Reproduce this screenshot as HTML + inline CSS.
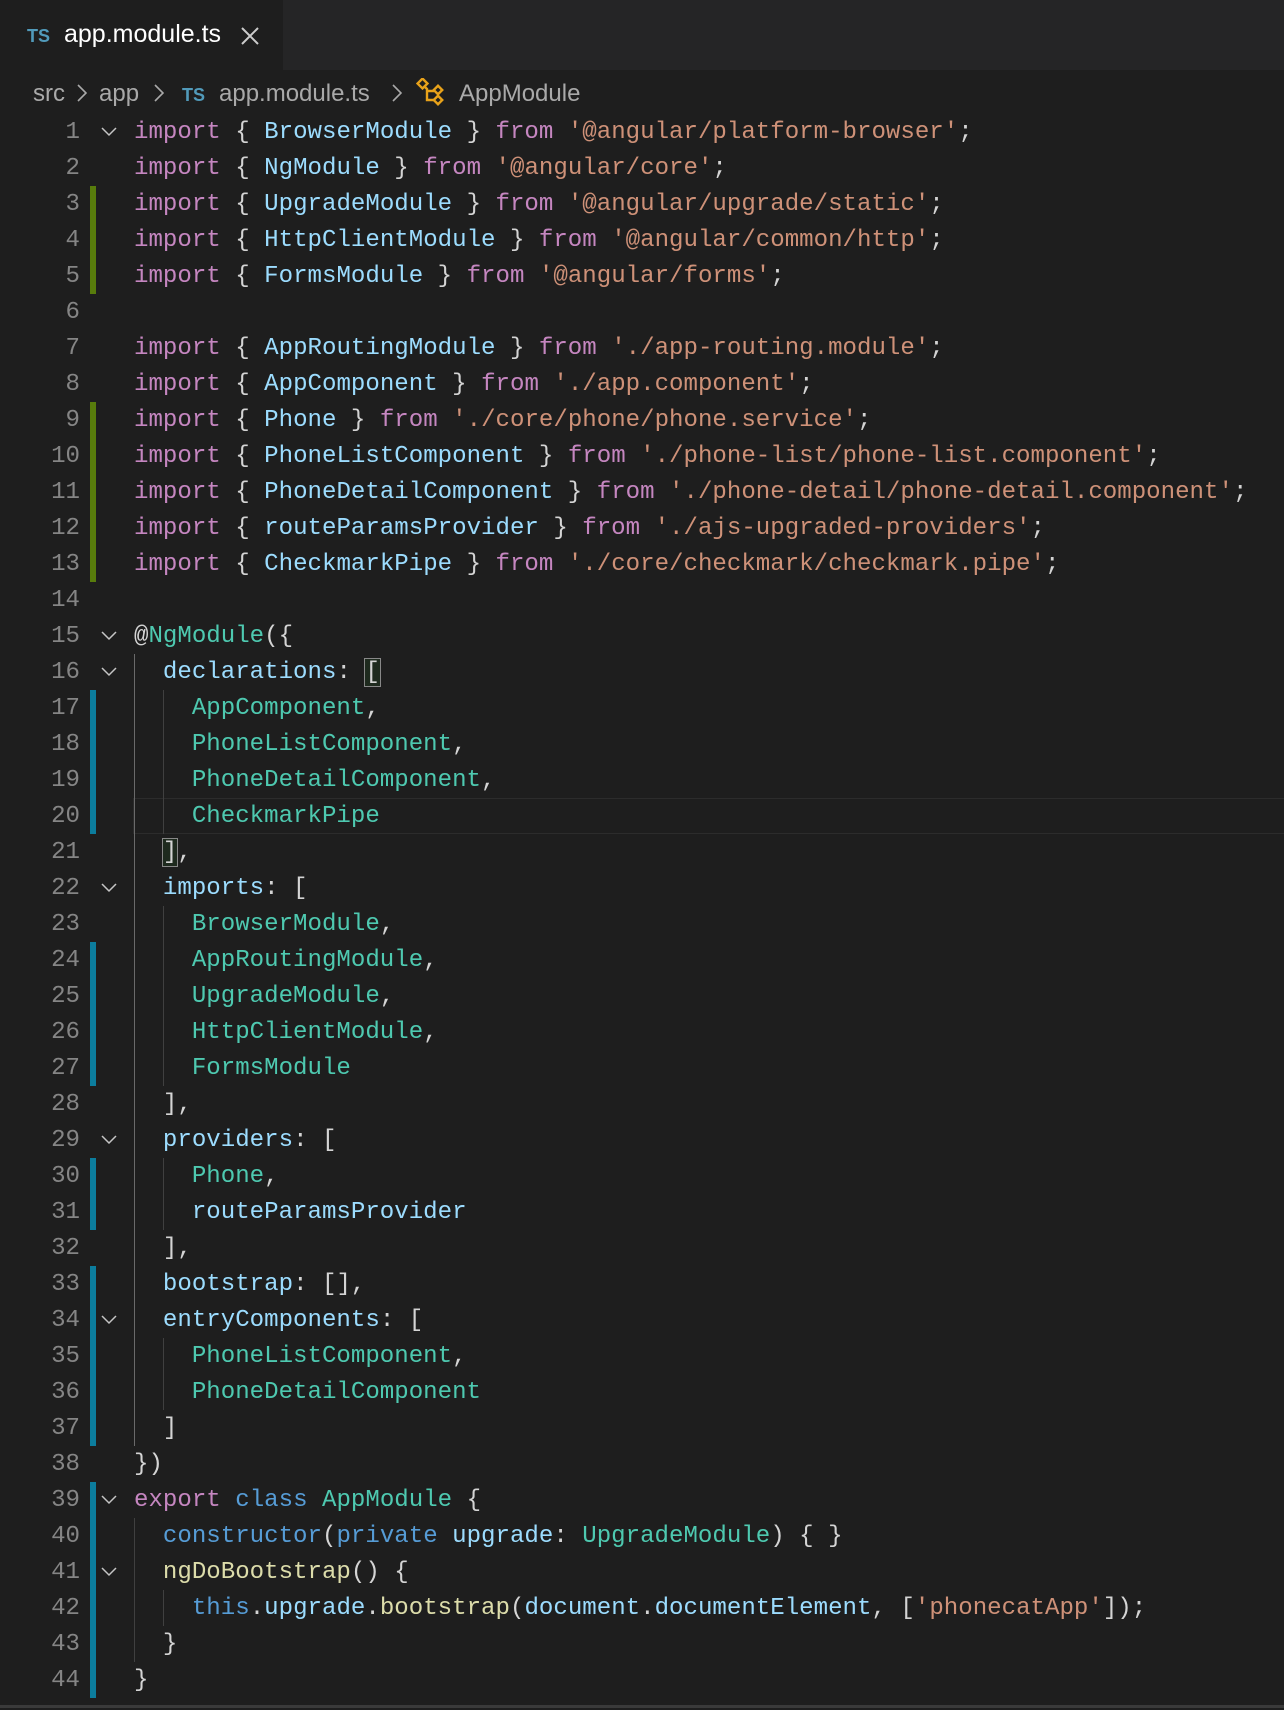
<!DOCTYPE html>
<html><head><meta charset="utf-8"><style>
body{margin:0;width:1284px;height:1710px;background:#1e1e1e;overflow:hidden;position:relative;font-family:"Liberation Mono",monospace}
.tabbar{position:absolute;left:0;top:0;width:1284px;height:70px;background:#252526}
.tab{position:absolute;left:0;top:0;width:283px;height:70px;background:#1e1e1e}
.ts{position:absolute;font-family:"Liberation Sans",sans-serif;font-weight:bold;color:#519aba}
.bc{position:absolute;top:77px;height:34px;font-family:"Liberation Sans",sans-serif;font-size:24px;color:#a9a9a9;line-height:34px;white-space:nowrap}
.ln{position:absolute;left:0;width:80px;text-align:right;height:36px;line-height:38px;font-size:24.1px;color:#858585}
.code{position:absolute;left:134px;height:36px;line-height:38px;font-size:24.1px;color:#d4d4d4;white-space:pre}
.g{position:absolute;left:90px;width:6px}
.fold{position:absolute;left:101px;width:16px;height:36px}
.guide{position:absolute;width:1px;background:#404040}
.k{color:#c586c0}.v{color:#9cdcfe}.s{color:#ce9178}.t{color:#4ec9b0}.b{color:#569cd6}.f{color:#dcdcaa}
.bm{outline:1px solid #888;background:#1e2a1e}
</style></head><body>
<div class="tabbar"></div>
<div class="tab"></div>
<div class="ts" style="left:27px;top:26px;font-size:18px">TS</div>
<div style="position:absolute;left:64px;top:20px;font-family:'Liberation Sans',sans-serif;font-size:25px;color:#fff">app.module.ts</div>
<svg style="position:absolute;left:241px;top:27px" width="18" height="18" viewBox="0 0 18 18"><path d="M1 1L17 17M17 1L1 17" stroke="#ccc" stroke-width="2"/></svg>
<div class="bc" style="left:33px">src</div>
<svg style="position:absolute;left:77px;top:84px" width="10" height="18"><path d="M1 1L9 9L1 17" stroke="#a9a9a9" stroke-width="1.6" fill="none"/></svg>
<div class="bc" style="left:99px">app</div>
<svg style="position:absolute;left:154px;top:84px" width="10" height="18"><path d="M1 1L9 9L1 17" stroke="#a9a9a9" stroke-width="1.6" fill="none"/></svg>
<div class="ts" style="left:182px;top:85px;font-size:18px">TS</div>
<div class="bc" style="left:219px">app.module.ts</div>
<svg style="position:absolute;left:392px;top:84px" width="10" height="18"><path d="M1 1L9 9L1 17" stroke="#a9a9a9" stroke-width="1.6" fill="none"/></svg>
<svg style="position:absolute;left:416px;top:78px" width="30" height="28" viewBox="0 0 30 28"><g fill="none" stroke="#e8a21a" stroke-width="2.4"><rect x="3" y="2" width="7" height="7" transform="rotate(45 6.5 5.5)"/><rect x="19" y="9" width="6" height="6" transform="rotate(45 22 12)"/><rect x="19" y="19" width="6" height="6" transform="rotate(45 22 22)"/><path d="M8 8L11 11V22H18M11 13H18"/></g></svg>
<div class="bc" style="left:459px">AppModule</div>

<div id="ed"></div>
<div style="position:absolute;left:0;top:1705px;width:1284px;height:3px;background:#3a3a3a"></div>
<script>
const L=[
`<span class="k">import</span> { <span class="v">BrowserModule</span> } <span class="k">from</span> <span class="s">'@angular/platform-browser'</span>;`,
`<span class="k">import</span> { <span class="v">NgModule</span> } <span class="k">from</span> <span class="s">'@angular/core'</span>;`,
`<span class="k">import</span> { <span class="v">UpgradeModule</span> } <span class="k">from</span> <span class="s">'@angular/upgrade/static'</span>;`,
`<span class="k">import</span> { <span class="v">HttpClientModule</span> } <span class="k">from</span> <span class="s">'@angular/common/http'</span>;`,
`<span class="k">import</span> { <span class="v">FormsModule</span> } <span class="k">from</span> <span class="s">'@angular/forms'</span>;`,
``,
`<span class="k">import</span> { <span class="v">AppRoutingModule</span> } <span class="k">from</span> <span class="s">'./app-routing.module'</span>;`,
`<span class="k">import</span> { <span class="v">AppComponent</span> } <span class="k">from</span> <span class="s">'./app.component'</span>;`,
`<span class="k">import</span> { <span class="v">Phone</span> } <span class="k">from</span> <span class="s">'./core/phone/phone.service'</span>;`,
`<span class="k">import</span> { <span class="v">PhoneListComponent</span> } <span class="k">from</span> <span class="s">'./phone-list/phone-list.component'</span>;`,
`<span class="k">import</span> { <span class="v">PhoneDetailComponent</span> } <span class="k">from</span> <span class="s">'./phone-detail/phone-detail.component'</span>;`,
`<span class="k">import</span> { <span class="v">routeParamsProvider</span> } <span class="k">from</span> <span class="s">'./ajs-upgraded-providers'</span>;`,
`<span class="k">import</span> { <span class="v">CheckmarkPipe</span> } <span class="k">from</span> <span class="s">'./core/checkmark/checkmark.pipe'</span>;`,
``,
`@<span class="t">NgModule</span>({`,
`  <span class="v">declarations</span>: <span class="bm">[</span>`,
`    <span class="t">AppComponent</span>,`,
`    <span class="t">PhoneListComponent</span>,`,
`    <span class="t">PhoneDetailComponent</span>,`,
`    <span class="t">CheckmarkPipe</span>`,
`  <span class="bm">]</span>,`,
`  <span class="v">imports</span>: [`,
`    <span class="t">BrowserModule</span>,`,
`    <span class="t">AppRoutingModule</span>,`,
`    <span class="t">UpgradeModule</span>,`,
`    <span class="t">HttpClientModule</span>,`,
`    <span class="t">FormsModule</span>`,
`  ],`,
`  <span class="v">providers</span>: [`,
`    <span class="t">Phone</span>,`,
`    <span class="v">routeParamsProvider</span>`,
`  ],`,
`  <span class="v">bootstrap</span>: [],`,
`  <span class="v">entryComponents</span>: [`,
`    <span class="t">PhoneListComponent</span>,`,
`    <span class="t">PhoneDetailComponent</span>`,
`  ]`,
`})`,
`<span class="k">export</span> <span class="b">class</span> <span class="t">AppModule</span> {`,
`  <span class="b">constructor</span>(<span class="b">private</span> <span class="v">upgrade</span>: <span class="t">UpgradeModule</span>) { }`,
`  <span class="f">ngDoBootstrap</span>() {`,
`    <span class="b">this</span>.<span class="v">upgrade</span>.<span class="f">bootstrap</span>(<span class="v">document</span>.<span class="v">documentElement</span>, [<span class="s">'phonecatApp'</span>]);`,
`  }`,
`}`];
const folds=[1,15,16,22,29,34,39,41];
const green=[3,4,5,9,10,11,12,13];
const blue=[17,18,19,20,24,25,26,27,30,31,33,34,35,36,37,39,40,41,42,43,44];
let h='';const T=i=>114+(i-1)*36;
h+=`<div style="position:absolute;left:133px;top:${T(20)}px;width:1151px;height:34px;border:1px solid #2c2c2c;border-right:none"></div>`;
for(let i=1;i<=44;i++){
 h+=`<div class="ln" style="top:${T(i)}px">${i}</div>`;
 h+=`<div class="code" style="top:${T(i)}px">${L[i-1]}</div>`;
 if(green.includes(i))h+=`<div class="g" style="top:${T(i)}px;height:36px;background:#587c0c"></div>`;
 if(blue.includes(i))h+=`<div class="g" style="top:${T(i)}px;height:36px;background:#0c7d9d"></div>`;
 if(folds.includes(i))h+=`<svg class="fold" style="top:${T(i)}px" viewBox="0 0 16 36"><path d="M1 14L8 21L15 14" stroke="#c5c5c5" stroke-width="1.5" fill="none"/></svg>`;
}
const cw=14.46;
const G=(c,a,b,col)=>h+=`<div class="guide" style="left:${134+c*cw}px;top:${T(a)}px;height:${(b-a+1)*36}px;background:${col||'#404040'}"></div>`;
G(0,16,37,'#6a6a6a');G(2,17,20);G(2,23,27);G(2,30,31);G(2,35,36);G(0,40,43);G(2,42,42);
document.getElementById('ed').innerHTML=h;
</script>
</body></html>
